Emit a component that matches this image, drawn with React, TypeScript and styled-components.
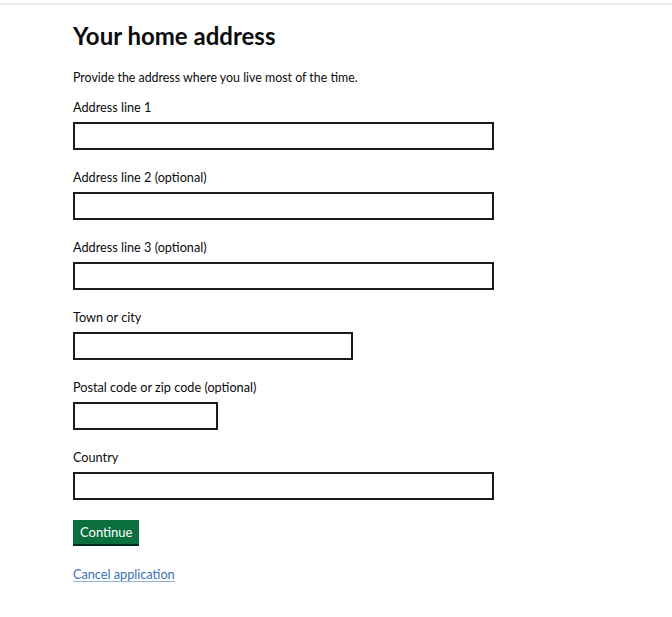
import React from 'react'
import styled, { createGlobalStyle } from 'styled-components'

const GlobalStyle = createGlobalStyle`
  html, body {
    margin: 0;
    padding: 0;
    background: #ffffff;
  }
  body {
    font-family: Lato, "Liberation Sans", Arial, sans-serif;
    color: #0b0c0c;
  }
`

const TopRule = styled.div`
  height: 3px;
  border-bottom: 2px solid #ebebeb;
`

const Main = styled.main`
  padding: 17px 0 40px 73px;
`

const Heading = styled.h1`
  margin: 0 0 19px;
  font-size: 24px;
  line-height: 27px;
  font-weight: 700;
`

const Hint = styled.p`
  margin: 0 0 9px;
  font-size: 12.4px;
  line-height: 20px;
`

const Form = styled.form`
  display: flex;
  flex-direction: column;
  align-items: flex-start;
`

const Field = styled.div`
  display: flex;
  flex-direction: column;
  gap: 5px;
  margin-bottom: 17px;

  &:last-of-type {
    margin-bottom: 20px;
  }
`

const Label = styled.label`
  font-size: 12.7px;
  line-height: 20px;
`

const Input = styled.input<{ $width: number }>`
  box-sizing: border-box;
  width: ${({ $width }) => $width}px;
  height: 28px;
  margin: 0;
  padding: 3px 5px;
  border: 2px solid #1a1b1b;
  border-radius: 0;
  font: inherit;
  font-size: 13px;
  background: #fff;
`

const Button = styled.button`
  margin: 0 0 20px;
  padding: 0 7px;
  height: 24px;
  border: 0;
  border-radius: 0;
  background: #0b6e3d;
  box-shadow: 0 2px 0 #002d18;
  color: #ffffff;
  font-family: inherit;
  font-size: 13px;
  line-height: 24px;
  cursor: pointer;
`

const CancelLink = styled.a`
  font-size: 12.7px;
  line-height: 20px;
  color: #3874b9;
  text-decoration: underline;
  text-decoration-thickness: 1px;
  text-underline-offset: 2px;
  text-decoration-color: #8fb0d8;
`

const fields = [
  { id: 'line1', label: 'Address line 1', width: 421 },
  { id: 'line2', label: 'Address line 2 (optional)', width: 421 },
  { id: 'line3', label: 'Address line 3 (optional)', width: 421 },
  { id: 'town', label: 'Town or city', width: 280 },
  { id: 'postcode', label: 'Postal code or zip code (optional)', width: 145 },
  { id: 'country', label: 'Country', width: 421 },
]

const App: React.FC = () => {
  return (
    <>
      <GlobalStyle />
      <TopRule />
      <Main>
        <Heading>Your home address</Heading>
        <Hint>Provide the address where you live most of the time.</Hint>
        <Form onSubmit={(e) => e.preventDefault()}>
          {fields.map((f) => (
            <Field key={f.id}>
              <Label htmlFor={f.id}>{f.label}</Label>
              <Input id={f.id} type="text" $width={f.width} />
            </Field>
          ))}
          <Button type="submit">Continue</Button>
          <CancelLink href="#">Cancel application</CancelLink>
        </Form>
      </Main>
    </>
  )
}

export default App
